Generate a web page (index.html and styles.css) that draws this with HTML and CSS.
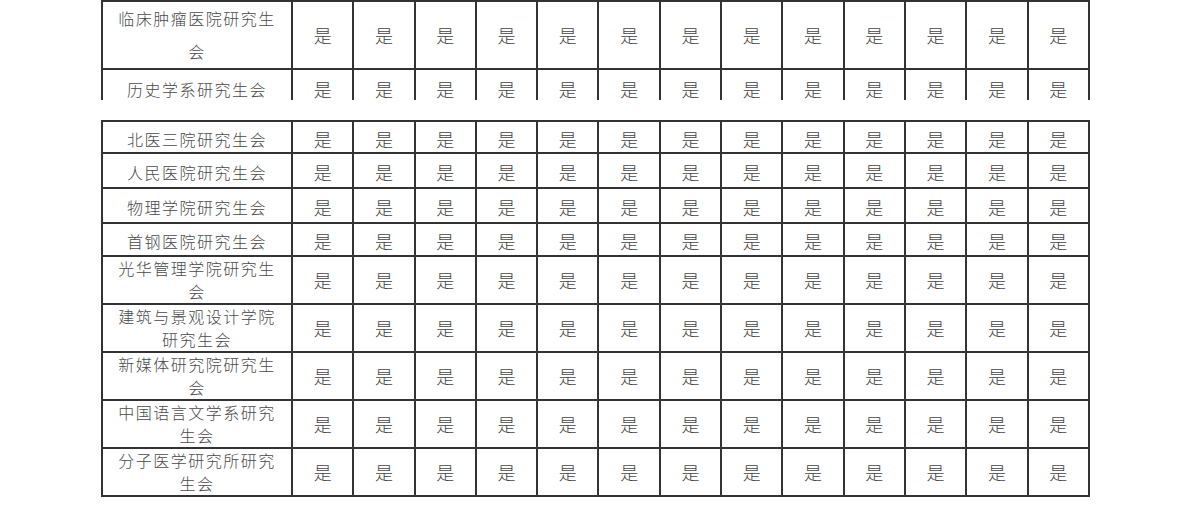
FILE: index.html
```html
<!DOCTYPE html>
<html lang="zh-CN">
<head>
<meta charset="utf-8">
<title>研究生会名单</title>
<link rel="stylesheet" href="styles.css">
</head>
<body>
<div class="page">
  <div class="frag frag-top">
    <table class="grid">
      <colgroup><col class="c-name"><col span="13" class="c-val"></colgroup>
      <tr class="row-tall"><td class="name">临床肿瘤医院研究生会</td><td>是</td><td>是</td><td>是</td><td>是</td><td>是</td><td>是</td><td>是</td><td>是</td><td>是</td><td>是</td><td>是</td><td>是</td><td>是</td></tr>
      <tr class="row-36"><td class="name">历史学系研究生会</td><td>是</td><td>是</td><td>是</td><td>是</td><td>是</td><td>是</td><td>是</td><td>是</td><td>是</td><td>是</td><td>是</td><td>是</td><td>是</td></tr>
    </table>
  </div>
  <div class="frag frag-bottom">
    <table class="grid">
      <colgroup><col class="c-name"><col span="13" class="c-val"></colgroup>
      <tr class="row-32"><td class="name">北医三院研究生会</td><td>是</td><td>是</td><td>是</td><td>是</td><td>是</td><td>是</td><td>是</td><td>是</td><td>是</td><td>是</td><td>是</td><td>是</td><td>是</td></tr>
      <tr class="row-35"><td class="name">人民医院研究生会</td><td>是</td><td>是</td><td>是</td><td>是</td><td>是</td><td>是</td><td>是</td><td>是</td><td>是</td><td>是</td><td>是</td><td>是</td><td>是</td></tr>
      <tr class="row-35"><td class="name">物理学院研究生会</td><td>是</td><td>是</td><td>是</td><td>是</td><td>是</td><td>是</td><td>是</td><td>是</td><td>是</td><td>是</td><td>是</td><td>是</td><td>是</td></tr>
      <tr class="row-33"><td class="name">首钢医院研究生会</td><td>是</td><td>是</td><td>是</td><td>是</td><td>是</td><td>是</td><td>是</td><td>是</td><td>是</td><td>是</td><td>是</td><td>是</td><td>是</td></tr>
      <tr class="row-48"><td class="name">光华管理学院研究生会</td><td>是</td><td>是</td><td>是</td><td>是</td><td>是</td><td>是</td><td>是</td><td>是</td><td>是</td><td>是</td><td>是</td><td>是</td><td>是</td></tr>
      <tr class="row-48"><td class="name">建筑与景观设计学院研究生会</td><td>是</td><td>是</td><td>是</td><td>是</td><td>是</td><td>是</td><td>是</td><td>是</td><td>是</td><td>是</td><td>是</td><td>是</td><td>是</td></tr>
      <tr class="row-48"><td class="name">新媒体研究院研究生会</td><td>是</td><td>是</td><td>是</td><td>是</td><td>是</td><td>是</td><td>是</td><td>是</td><td>是</td><td>是</td><td>是</td><td>是</td><td>是</td></tr>
      <tr class="row-48"><td class="name">中国语言文学系研究生会</td><td>是</td><td>是</td><td>是</td><td>是</td><td>是</td><td>是</td><td>是</td><td>是</td><td>是</td><td>是</td><td>是</td><td>是</td><td>是</td></tr>
      <tr class="row-48"><td class="name">分子医学研究所研究生会</td><td>是</td><td>是</td><td>是</td><td>是</td><td>是</td><td>是</td><td>是</td><td>是</td><td>是</td><td>是</td><td>是</td><td>是</td><td>是</td></tr>
    </table>
  </div>
</div>
</body>
</html>
```
FILE: styles.css
```css
html, body {
  margin: 0;
  padding: 0;
  background: #ffffff;
}

.page {
  padding-left: 101px;
  font-family: "Noto Sans CJK SC", "Noto Sans", sans-serif;
}

.frag-top {
  height: 100px;
  overflow: hidden;
}

.frag-bottom {
  margin-top: 20px;
}

.grid {
  border-collapse: collapse;
  table-layout: fixed;
  width: 989px;
}

.c-name {
  width: 190px;
}

.grid td {
  border: 2px solid #333333;
  padding: 3px 0 0;
  text-align: center;
  vertical-align: middle;
  font-size: 18px;
  line-height: 24px;
  color: #444444;
  font-weight: 300;
}

.grid td.name {
  padding: 3px 12px 0;
  font-size: 16px;
  letter-spacing: 1.5px;
  color: #4a4a4a;
}

.row-tall td,
.row-tall td.name {
  height: 66px;
  padding-top: 0;
}

.row-tall td.name {
  line-height: 33px;
}

.row-36 td { height: 31px; }
.row-32 td { height: 27px; }
.row-35 td { height: 30px; }
.row-33 td { height: 28px; }

.row-48 td,
.row-48 td.name {
  height: 46px;
  padding-top: 0;
}

.row-48 td.name {
  line-height: 23px;
}
```
